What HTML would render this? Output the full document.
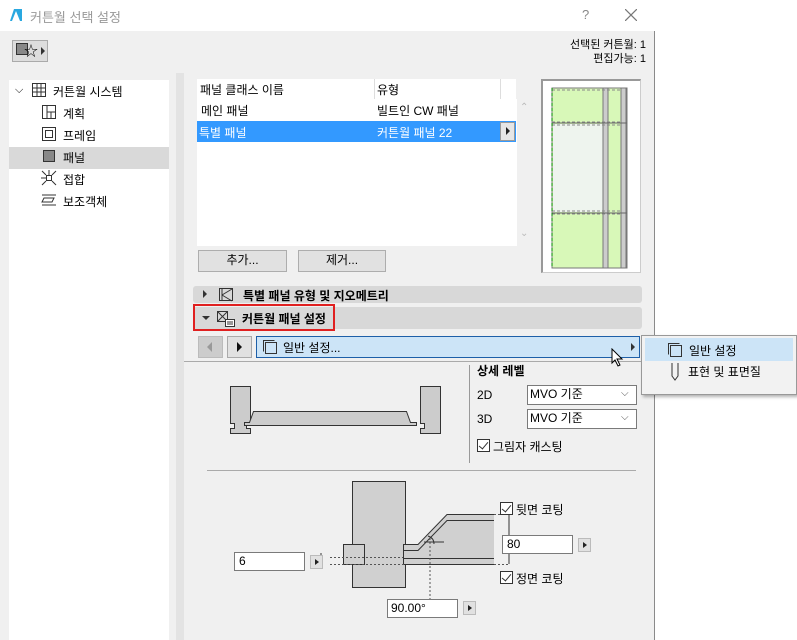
<!DOCTYPE html>
<html><head><meta charset="utf-8"><style>
*{box-sizing:border-box}
body{margin:0;width:797px;height:640px;background:#fff;font-family:"Liberation Sans","Noto Sans CJK KR",sans-serif;font-size:12px;color:#000;position:relative;overflow:hidden}
.a{position:absolute}
.dlg{left:0;top:0;width:655px;height:640px;background:#f0f0f0;border-right:1px solid #8a8a8a;border-top:1px solid #aaa}
.t{white-space:nowrap}
.btn{background:#e1e1e1;border:1px solid #adadad;text-align:center;line-height:19px}
.inp{background:#fff;border:1px solid #7a7a7a;padding-left:4px;line-height:19px}
.sm{width:13px;height:14px;background:#e1e1e1;border:1px solid #bbb}
.sm:after{content:"";position:absolute;left:4px;top:3px;border-left:4px solid #222;border-top:3.5px solid transparent;border-bottom:3.5px solid transparent}
.cb{width:13px;height:13px;border:1px solid #333;background:#fff}
.cb:after{content:"";position:absolute;left:3px;top:0px;width:4px;height:8px;border-right:1.5px solid #333;border-bottom:1.5px solid #333;transform:rotate(40deg)}
</style></head><body>
<div class="a dlg"></div>
<div class="a" style="left:0;top:0;width:655px;height:31px;background:#fff"></div>
<svg class="a" style="left:9px;top:8px" width="14" height="14"><path d="M1 13 L5 1 L13 1 L13 13 Z" fill="#29a8e0"/><path d="M3 13 L7 3 L11 13" fill="#fff"/></svg>
<div class="a t" style="left:30px;top:7px;color:#999;font-size:13px">커튼월 선택 설정</div>
<div class="a t" style="left:582px;top:7px;color:#888;font-size:13px">?</div>
<svg class="a" style="left:625px;top:9px" width="12" height="12"><path d="M0 0L12 12M12 0L0 12" stroke="#777" stroke-width="1.2"/></svg>
<div class="a" style="left:12px;top:40px;width:36px;height:22px;border:1px solid #aaa;background:#ddd"></div>
<div class="a" style="left:16px;top:43px;width:12px;height:12px;background:#888;border:1px solid #333"></div>
<div class="a t" style="left:24px;top:44px;font-size:14px;line-height:14px">☆</div>
<div class="a" style="left:41px;top:47px;border-left:4px solid #333;border-top:4px solid transparent;border-bottom:4px solid transparent"></div>
<div class="a t" style="left:564px;top:38px;text-align:right;width:82px;font-size:11px;line-height:14px;direction:rtl">선택된 커튼월: 1</div>
<div class="a t" style="left:564px;top:52px;width:82px;text-align:right;font-size:11px;line-height:14px">편집가능: 1</div>
<!-- tree -->
<div class="a" style="left:9px;top:80px;width:160px;height:560px;background:#fff"></div>
<div class="a" style="left:9px;top:147px;width:160px;height:22px;background:#d9d9d9"></div>
<div class="a t" style="left:15px;top:84px;font-size:11px">⌵</div>
<svg class="a" style="left:31px;top:82px" width="16" height="16"><rect x="1.5" y="1.5" width="13" height="13" fill="none" stroke="#333"/><path d="M1 6H15M1 10H15M6 1V15M10 1V15" stroke="#333"/></svg>
<div class="a t" style="left:53px;top:83px">커튼월 시스템</div>
<svg class="a" style="left:41px;top:104px" width="16" height="16"><rect x="1.5" y="1.5" width="13" height="13" fill="none" stroke="#333"/><path d="M6 1V15M6 8H15M10 8V15" stroke="#333"/></svg>
<div class="a t" style="left:63px;top:105px">계획</div>
<svg class="a" style="left:41px;top:126px" width="16" height="16"><rect x="1.5" y="1.5" width="13" height="13" fill="none" stroke="#333"/><rect x="4.5" y="4.5" width="7" height="7" fill="none" stroke="#333"/></svg>
<div class="a t" style="left:63px;top:127px">프레임</div>
<svg class="a" style="left:41px;top:148px" width="16" height="16"><rect x="2.5" y="2.5" width="11" height="11" fill="#888" stroke="#333"/></svg>
<div class="a t" style="left:63px;top:149px">패널</div>
<svg class="a" style="left:41px;top:170px" width="16" height="16"><rect x="5.5" y="5.5" width="5" height="5" fill="none" stroke="#333"/><path d="M1 1L5 5M15 1L11 5M1 15L5 11M15 15L11 11M8 0V5M0 8H5" stroke="#333"/></svg>
<div class="a t" style="left:63px;top:171px">접합</div>
<svg class="a" style="left:41px;top:192px" width="16" height="16"><path d="M1 3H15M1 13H15M3 6L13 6L11 10L1 10Z" fill="none" stroke="#333"/></svg>
<div class="a t" style="left:63px;top:193px">보조객체</div>
<!-- right area -->
<div class="a" style="left:176px;top:73px;width:8px;height:567px;background:#e3e3e3"></div>
<div class="a" style="left:197px;top:79px;width:320px;height:167px;background:#fff"></div>
<div class="a" style="left:197px;top:79px;width:319px;height:20px;background:#fff;border-bottom:1px solid #fff"></div>
<div class="a" style="left:374px;top:79px;width:1px;height:20px;background:#ddd"></div>
<div class="a" style="left:500px;top:79px;width:1px;height:20px;background:#ddd"></div>
<div class="a" style="left:516px;top:79px;width:17px;height:20px;background:#f0f0f0"></div>
<div class="a t" style="left:200px;top:81px">패널 클래스 이름</div>
<div class="a t" style="left:377px;top:81px">유형</div>
<div class="a t" style="left:201px;top:102px">메인 패널</div>
<div class="a t" style="left:377px;top:102px">빌트인 CW 패널</div>
<div class="a" style="left:197px;top:121px;width:319px;height:21px;background:#3399ff"></div>
<div class="a t" style="left:199px;top:124px;color:#fff">특별 패널</div>
<div class="a t" style="left:377px;top:124px;color:#fff">커튼월 패널 22</div>
<div class="a" style="left:500px;top:122px;width:15px;height:19px;background:#e6e6e6;border:1px solid #999"></div>
<div class="a" style="left:506px;top:127px;border-left:4px solid #222;border-top:4px solid transparent;border-bottom:4px solid transparent"></div>
<div class="a" style="left:517px;top:99px;width:16px;height:147px;background:#f0f0f0"></div>
<div class="a t" style="left:520px;top:102px;color:#bbb;font-size:10px">⌃</div>
<div class="a t" style="left:520px;top:228px;color:#bbb;font-size:10px">⌄</div>
<!-- preview -->
<div class="a" style="left:541px;top:79px;width:100px;height:194px;background:#fff;border:1px solid #ccc;border-top:2px solid #999;border-left:2px solid #999"></div>
<svg class="a" style="left:550px;top:87px" width="80" height="182">
<rect x="2" y="1" width="75" height="180" fill="#d8f8b8" stroke="#777"/>
<rect x="3" y="37" width="52" height="88" fill="#eef4ee"/>
<rect x="53" y="1" width="5" height="180" fill="#ccc" stroke="#777"/>
<rect x="71" y="1" width="5" height="180" fill="#ccc" stroke="#777"/>
<path d="M2 3H72M2 35H72M2 38H72M2 124H72M2 127H72" stroke="#888" stroke-dasharray="3,2"/>
<path d="M2 36H77M2 126H77" stroke="#666"/>
<path d="M2 1V181" stroke="#080" stroke-dasharray="3,2"/>
</svg>
<div class="a btn" style="left:198px;top:250px;width:89px;height:22px">추가...</div>
<div class="a btn" style="left:298px;top:250px;width:88px;height:22px">제거...</div>
<!-- sections -->
<div class="a" style="left:193px;top:286px;width:449px;height:17px;background:#d8d8d8;border-radius:3px"></div>
<div class="a" style="left:203px;top:290px;border-left:4px solid #333;border-top:4px solid transparent;border-bottom:4px solid transparent"></div>
<svg class="a" style="left:218px;top:287px" width="16" height="15"><rect x="1.5" y="1.5" width="13" height="12" fill="none" stroke="#333"/><path d="M4 1V14M4 8L14 2M4 8L14 14" fill="none" stroke="#333"/></svg>
<div class="a t" style="left:243px;top:287px;font-weight:bold">특별 패널 유형 및 지오메트리</div>
<div class="a" style="left:193px;top:307px;width:449px;height:22px;background:#d8d8d8;border-radius:3px"></div>
<div class="a" style="left:193px;top:304px;width:142px;height:27px;border:2px solid #e02020"></div>
<div class="a" style="left:202px;top:316px;border-top:4px solid #333;border-left:4px solid transparent;border-right:4px solid transparent"></div>
<svg class="a" style="left:216px;top:310px" width="20" height="18"><rect x="1.5" y="1.5" width="10" height="10" fill="none" stroke="#333"/><path d="M2 2L11 11M11 2L2 11" stroke="#333"/><rect x="9.5" y="9.5" width="9" height="7" fill="#fff" stroke="#333"/><path d="M11 12H17M11 14H17" stroke="#333"/></svg>
<div class="a t" style="left:242px;top:310px;font-weight:bold">커튼월 패널 설정</div>
<!-- nav row -->
<div class="a" style="left:198px;top:336px;width:25px;height:22px;background:#ccc;border:1px solid #bbb"></div>
<div class="a" style="left:207px;top:342px;border-right:5px solid #999;border-top:5px solid transparent;border-bottom:5px solid transparent"></div>
<div class="a" style="left:227px;top:336px;width:25px;height:22px;background:#e1e1e1;border:1px solid #aaa"></div>
<div class="a" style="left:237px;top:342px;border-left:5px solid #111;border-top:5px solid transparent;border-bottom:5px solid transparent"></div>
<div class="a" style="left:256px;top:336px;width:384px;height:22px;background:#cce4f7;border:1px solid #1d5fa8"></div>
<svg class="a" style="left:262px;top:339px" width="16" height="16"><rect x="3.5" y="3.5" width="11" height="11" fill="none" stroke="#333"/><path d="M1.5 12.5V1.5H12.5" fill="none" stroke="#333"/></svg>
<div class="a t" style="left:283px;top:339px">일반 설정...</div>
<div class="a" style="left:631px;top:343px;border-left:4px solid #333;border-top:4px solid transparent;border-bottom:4px solid transparent"></div>
<div class="a" style="left:184px;top:361px;width:458px;height:1px;background:#aaa"></div>
<!-- popup -->
<div class="a" style="left:641px;top:335px;width:156px;height:60px;background:#f2f2f2;border:1px solid #999;box-shadow:2px 2px 3px rgba(0,0,0,.3)"></div>
<div class="a" style="left:645px;top:338px;width:148px;height:23px;background:#cce4f7"></div>
<svg class="a" style="left:667px;top:342px" width="16" height="16"><rect x="3.5" y="3.5" width="11" height="11" fill="none" stroke="#333"/><path d="M1.5 12.5V1.5H12.5" fill="none" stroke="#333"/></svg>
<div class="a t" style="left:689px;top:342px">일반 설정</div>
<svg class="a" style="left:670px;top:362px" width="10" height="20"><path d="M2 1V14L5 18L8 14V1" fill="none" stroke="#333"/></svg>
<div class="a t" style="left:688px;top:363px">표현 및 표면질</div>
<svg class="a" style="left:611px;top:348px" width="14" height="20"><path d="M1 1V15L4 12L7 18L9 17L6 11H11Z" fill="#fff" stroke="#000"/></svg>
<!-- detail level -->
<div class="a" style="left:469px;top:365px;width:1px;height:98px;background:#999"></div>
<div class="a t" style="left:477px;top:362px;font-weight:bold">상세 레벨</div>
<div class="a t" style="left:477px;top:388px">2D</div>
<div class="a t" style="left:477px;top:412px">3D</div>
<div class="a inp" style="left:527px;top:385px;width:110px;height:20px;line-height:17px;padding-left:2px">MVO 기준</div>
<div class="a inp" style="left:527px;top:409px;width:110px;height:20px;line-height:17px;padding-left:2px">MVO 기준</div>
<div class="a t" style="left:621px;top:388px;font-size:10px;color:#555">⌵</div>
<div class="a t" style="left:621px;top:412px;font-size:10px;color:#555">⌵</div>
<div class="a cb" style="left:477px;top:439px"></div>
<div class="a t" style="left:493px;top:438px">그림자 캐스팅</div>
<svg class="a" style="left:225px;top:380px" width="220" height="60"><path d="M5.5 6.5H25.5V43.5H21.5V48.5H25.5V53.5H5.5V48.5H9.5V43.5H5.5Z" fill="#ccc" stroke="#333"/><path d="M195.5 6.5H215.5V53.5H195.5V48.5H199.5V43.5H195.5Z" fill="#ccc" stroke="#333"/><path d="M19.5 45.5V42.5H24.5L28.5 31.5H181.5L185.5 42.5H191.5V45.5Z" fill="#ccc" stroke="#333"/></svg>
<div class="a" style="left:207px;top:470px;width:429px;height:1px;background:#aaa"></div>
<!-- coating diagram -->
<svg class="a" style="left:300px;top:478px" width="210" height="132">
<rect x="52.5" y="3.5" width="53" height="106" fill="#d0d0d0" stroke="#333"/>
<rect x="43.5" y="66.5" width="21" height="20" fill="#d0d0d0" stroke="#333"/>
<path d="M103.5 86.5V66.5H118L147 36.5H194V86.5Z" fill="#d0d0d0"/>
<path d="M103.5 86.5V66.5H118L147 36.5H194M103.5 72.5H118L147 42.5H194M103.5 80.5H194M103.5 86.5H194" fill="none" stroke="#333"/>
<path d="M30 79.5H103M30 86.5H103M194 36.5H212M194 86.5H212M130 60V130" stroke="#555" stroke-dasharray="2,2" fill="none"/>
<path d="M21 75V89M209 37V86M128 58Q134 60 134 66M124 64H144" stroke="#333" fill="none"/>
</svg>
<div class="a cb" style="left:500px;top:502px"></div>
<div class="a t" style="left:516px;top:501px">뒷면 코팅</div>
<div class="a inp" style="left:502px;top:535px;width:71px;height:19px;line-height:17px">80</div>
<div class="a sm" style="left:578px;top:538px"></div>
<div class="a cb" style="left:500px;top:571px"></div>
<div class="a t" style="left:516px;top:570px">정면 코팅</div>
<div class="a inp" style="left:234px;top:552px;width:71px;height:19px;line-height:17px">6</div>
<div class="a sm" style="left:310px;top:555px"></div>
<div class="a inp" style="left:387px;top:599px;width:71px;height:19px;line-height:17px;padding-left:3px">90.00°</div>
<div class="a sm" style="left:463px;top:601px"></div>
</body></html>
